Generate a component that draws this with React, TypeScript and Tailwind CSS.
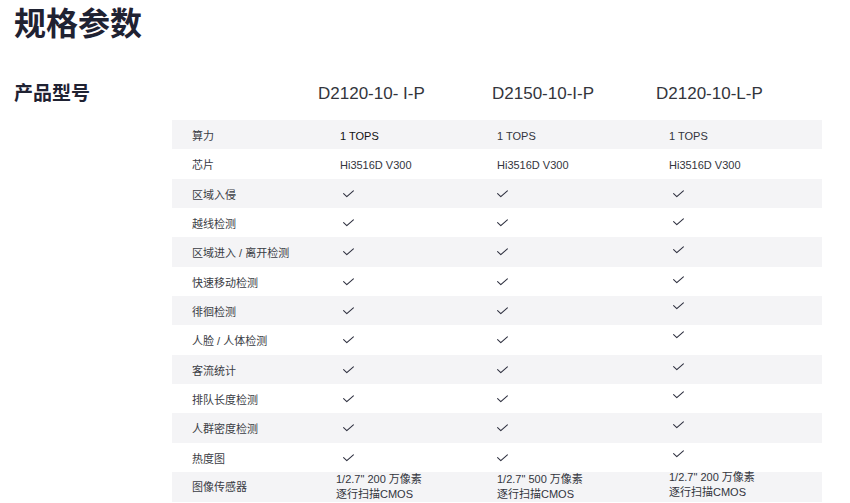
import React from "react";

const FONT = { fontFamily: '"Liberation Sans", "Noto Sans CJK SC", sans-serif' };

function Check({ cls = "" }: { cls?: string }) {
  return (
    <svg width="11" height="8" viewBox="0 0 11 8" className={cls} fill="none">
      <polyline points="0.6,3.6 3.8,6.6 10.4,0.8" stroke="#2f3140" strokeWidth="1.1" strokeLinecap="round" strokeLinejoin="round" />
    </svg>
  );
}

type Cell = { kind: "text"; v: string; dark?: boolean } | { kind: "check" };

const col3Offsets: Record<string, string> = {
  "区域入侵": "",
  "越线检测": "-translate-y-[1px]",
  "区域进入 / 离开检测": "-translate-y-[2px]",
  "快速移动检测": "-translate-y-[2px]",
  "徘徊检测": "-translate-y-[5px]",
  "人脸 / 人体检测": "-translate-y-[5px]",
  "客流统计": "-translate-y-[3px]",
  "排队长度检测": "-translate-y-[4px]",
  "人群密度检测": "-translate-y-[3px]",
  "热度图": "-translate-y-[4px]",
};

const checkRows = [
  "区域入侵",
  "越线检测",
  "区域进入 / 离开检测",
  "快速移动检测",
  "徘徊检测",
  "人脸 / 人体检测",
  "客流统计",
  "排队长度检测",
  "人群密度检测",
  "热度图",
];

export default function App() {
  const rows: { label: string; cells: Cell[] }[] = [
    {
      label: "算力",
      cells: [
        { kind: "text", v: "1 TOPS", dark: true },
        { kind: "text", v: "1 TOPS" },
        { kind: "text", v: "1 TOPS" },
      ],
    },
    {
      label: "芯片",
      cells: [
        { kind: "text", v: "Hi3516D V300" },
        { kind: "text", v: "Hi3516D V300" },
        { kind: "text", v: "Hi3516D V300" },
      ],
    },
    ...checkRows.map((l) => ({ label: l, cells: [{ kind: "check" }, { kind: "check" }, { kind: "check" }] as Cell[] })),
  ];

  const widths = ["w-[157px]", "w-[172px]", "w-[153px]"];

  return (
    <div className="min-h-[503px] w-[850px] overflow-hidden bg-white" style={FONT}>
      <h1 className="ml-[14px] mt-[4px] text-[32px] font-semibold leading-[40px] text-[#1f2232]">规格参数</h1>

      <div className="mt-[30px] flex h-[40px] items-center">
        <div className="w-[318px] pl-[14px] text-[19px] font-semibold text-[#1f2232]">产品型号</div>
        <div className="w-[174px] text-[17px] text-[#33353c]">D2120-10- I-P</div>
        <div className="w-[164px] text-[17px] text-[#33353c]">D2150-10-I-P</div>
        <div className="text-[17px] text-[#33353c]">D2120-10-L-P</div>
      </div>

      <div className="ml-[172px] mt-[6px] w-[650px] text-[11px]">
        {rows.map((r, i) => (
          <div key={r.label} className={`flex h-[29.33px] items-center ${i % 2 === 0 ? "bg-[#f4f4f6]" : "bg-white"}`}>
            <div className="w-[168px] pl-[20px] pt-[3px] text-[#3a3c44]">{r.label}</div>
            {r.cells.map((c, j) => (
              <div key={j} className={`${widths[j]} flex items-center ${c.kind === "text" ? "pt-[3px]" : "pt-[1px]"}`}>
                {c.kind === "text" ? (
                  <span className={c.dark ? "text-[#111111]" : "text-[#33353d]"}>{c.v}</span>
                ) : (
                  <Check cls={j === 0 ? "ml-[3px]" : j === 2 ? `ml-[4px] ${col3Offsets[r.label] ?? ""}` : ""} />
                )}
              </div>
            ))}
          </div>
        ))}
        <div className="flex h-[30px] items-center bg-[#f4f4f6]">
          <div className="w-[164px] pl-[20px] text-[#3a3c44]">图像传感器</div>
          <div className="w-[161px] text-[#33353d] leading-[15px]">
            <div>1/2.7" 200 万像素</div>
            <div>逐行扫描CMOS</div>
          </div>
          <div className="w-[172px] text-[#33353d] leading-[15px]">
            <div>1/2.7" 500 万像素</div>
            <div>逐行扫描CMOS</div>
          </div>
          <div className="-translate-y-[2px] text-[#33353d] leading-[15px]">
            <div>1/2.7" 200 万像素</div>
            <div>逐行扫描CMOS</div>
          </div>
        </div>
      </div>
    </div>
  );
}
